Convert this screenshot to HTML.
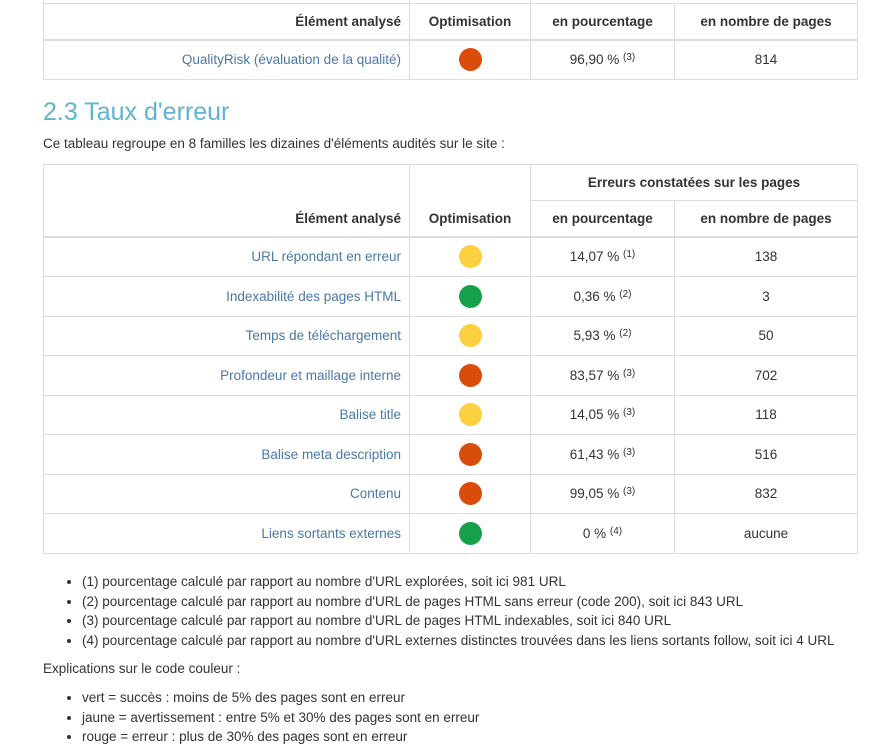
<!DOCTYPE html>
<html><head><meta charset="utf-8"><style>
body{margin:0;width:883px;height:750px;overflow:hidden;background:#fff;font-family:"Liberation Sans",Arial,sans-serif;font-size:13.5px;color:#333;position:relative}
table{position:absolute;left:43px;width:814px;border-collapse:collapse;table-layout:fixed}
td,th{border:1px solid #ddd;padding:0 8px;text-align:center;font-size:13.5px}
th{font-weight:bold;color:#333}
th.l,td.l{text-align:right}
tr.h th{border-bottom:2px solid #ddd}
td.l{color:#4a78a8}
.d{display:inline-block;width:23px;height:23px;border-radius:50%;vertical-align:middle}
.r{background:#d94c0c}.y{background:#fdd03f}.g{background:#14a14a}
sup{font-size:10px;vertical-align:4px;line-height:0}
h2{position:absolute;left:43px;top:98px;margin:0;font-weight:normal;font-size:25px;color:#5fb3d3}
p{position:absolute;left:43px;margin:0}
ul{position:absolute;left:43px;margin:0;padding-left:39px;line-height:19.5px}
</style></head><body>
<table style="top:-34px">
<colgroup><col style="width:366px"><col style="width:121px"><col style="width:144px"><col style="width:183px"></colgroup>
<tr style="height:37px"><th></th><th></th><th colspan="2"></th></tr>
<tr class="h" style="height:36px"><th class="l">Élément analysé</th><th>Optimisation</th><th>en pourcentage</th><th>en nombre de pages</th></tr>
<tr style="height:40px"><td class="l">QualityRisk (évaluation de la qualité)</td><td><span class="d r"></span></td><td>96,90 % <sup>(3)</sup></td><td>814</td></tr>
</table>
<h2>2.3 Taux d'erreur</h2>
<p style="top:136px">Ce tableau regroupe en 8 familles les dizaines d'éléments audités sur le site :</p>
<table style="top:164px">
<colgroup><col style="width:366px"><col style="width:121px"><col style="width:144px"><col style="width:183px"></colgroup>
<tr style="height:36px"><th rowspan="2" class="l" style="vertical-align:bottom;padding-bottom:10px;border-bottom:2px solid #ddd">Élément analysé</th><th rowspan="2" style="vertical-align:bottom;padding-bottom:10px;border-bottom:2px solid #ddd">Optimisation</th><th colspan="2">Erreurs constatées sur les pages</th></tr>
<tr class="h" style="height:36px"><th>en pourcentage</th><th>en nombre de pages</th></tr>
<tr style="height:40px"><td class="l">URL répondant en erreur</td><td><span class="d y"></span></td><td>14,07 % <sup>(1)</sup></td><td>138</td></tr>
<tr style="height:39.5px"><td class="l">Indexabilité des pages HTML</td><td><span class="d g"></span></td><td>0,36 % <sup>(2)</sup></td><td>3</td></tr>
<tr style="height:39.5px"><td class="l">Temps de téléchargement</td><td><span class="d y"></span></td><td>5,93 % <sup>(2)</sup></td><td>50</td></tr>
<tr style="height:39.5px"><td class="l">Profondeur et maillage interne</td><td><span class="d r"></span></td><td>83,57 % <sup>(3)</sup></td><td>702</td></tr>
<tr style="height:39.5px"><td class="l">Balise title</td><td><span class="d y"></span></td><td>14,05 % <sup>(3)</sup></td><td>118</td></tr>
<tr style="height:39.5px"><td class="l">Balise meta description</td><td><span class="d r"></span></td><td>61,43 % <sup>(3)</sup></td><td>516</td></tr>
<tr style="height:39.5px"><td class="l">Contenu</td><td><span class="d r"></span></td><td>99,05 % <sup>(3)</sup></td><td>832</td></tr>
<tr style="height:39.5px"><td class="l">Liens sortants externes</td><td><span class="d g"></span></td><td>0 % <sup>(4)</sup></td><td>aucune</td></tr>
</table>
<ul style="top:572px">
<li>(1) pourcentage calculé par rapport au nombre d'URL explorées, soit ici 981 URL</li>
<li>(2) pourcentage calculé par rapport au nombre d'URL de pages HTML sans erreur (code 200), soit ici 843 URL</li>
<li>(3) pourcentage calculé par rapport au nombre d'URL de pages HTML indexables, soit ici 840 URL</li>
<li>(4) pourcentage calculé par rapport au nombre d'URL externes distinctes trouvées dans les liens sortants follow, soit ici 4 URL</li>
</ul>
<p style="top:661px">Explications sur le code couleur :</p>
<ul style="top:688px">
<li>vert = succès : moins de 5% des pages sont en erreur</li>
<li>jaune = avertissement : entre 5% et 30% des pages sont en erreur</li>
<li>rouge = erreur : plus de 30% des pages sont en erreur</li>
</ul>
</body></html>
